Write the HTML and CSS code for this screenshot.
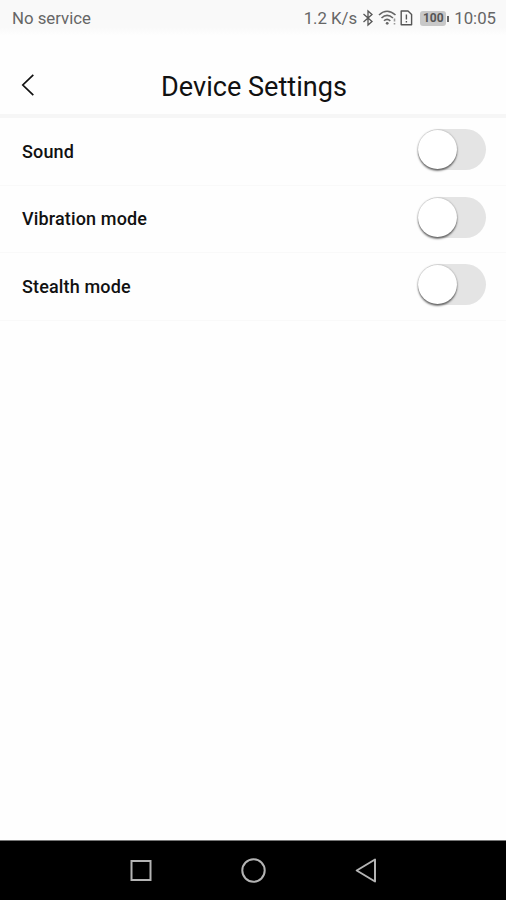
FILE: index.html
```html
<!DOCTYPE html>
<html lang="en">
<head>
    <meta charset="UTF-8">
    <meta name="viewport" content="width=device-width, initial-scale=1.0">
    <title>Device Settings</title>
    <link rel="stylesheet" href="styles.css">
</head>
<body>

    <div class="status-bar">
        <span class="carrier">No service</span>
        <div class="status-right">
            <span class="speed">1.2 K/s</span>
            <svg class="icon-bluetooth" width="12" height="18" viewBox="0 0 12 18" fill="none" stroke="#555" stroke-width="1.3">
                <path d="M1.5 5 L10 12.5 L6 16 V2 L10 5.5 L1.5 13"/>
            </svg>
            <svg class="icon-wifi" width="19" height="18" viewBox="0 0 19 18" fill="none" stroke="#666" stroke-width="1.6">
                <path d="M1 6 Q9 -1.5 17.5 6"/>
                <path d="M3.5 9 Q9 3.8 15 9"/>
                <path d="M6 11.8 Q9 8.8 12.3 11.8"/>
                <circle cx="9.2" cy="14.3" r="1.4" fill="#666" stroke="none"/>
                <path d="M16.5 9.5 V12.5 M16.5 14 V15.5" stroke="#999"/>
            </svg>
            <svg class="icon-sim" width="13" height="18" viewBox="0 0 13 18" fill="none" stroke="#555" stroke-width="1.4">
                <path d="M1.2 2 H8 L11.6 5.6 V15.8 H1.2 Z" stroke-linejoin="round"/>
                <path d="M6.4 5.5 V10.5 M6.4 12 V13.6"/>
            </svg>
            <div class="battery"><span>100</span></div>
            <span class="clock">10:05</span>
        </div>
    </div>

    <div class="header">
        <a href="#" class="back-button" aria-label="Back">
            <svg width="14" height="24" viewBox="0 0 14 24" fill="none" stroke="#111" stroke-width="1.7">
                <path d="M12.3 1.8 L1.8 12 L12.3 22.2"/>
            </svg>
        </a>
        <h1>Device Settings</h1>
    </div>

    <div class="settings">
        <label class="setting">
            <span>Sound</span>
            <input type="checkbox" class="switch">
        </label>
        <label class="setting">
            <span>Vibration mode</span>
            <input type="checkbox" class="switch">
        </label>
        <label class="setting">
            <span>Stealth mode</span>
            <input type="checkbox" class="switch">
        </label>
    </div>

    <div class="nav-bar">
        <svg width="24" height="26" viewBox="0 0 24 26" fill="none" stroke="#b4b4b4" stroke-width="2">
            <rect x="3.5" y="3" width="19" height="19"/>
        </svg>
        <svg width="26" height="26" viewBox="0 0 26 26" fill="none" stroke="#b4b4b4" stroke-width="2">
            <circle cx="13.5" cy="12.5" r="11.2"/>
        </svg>
        <svg width="24" height="26" viewBox="0 0 24 26" fill="none" stroke="#b4b4b4" stroke-width="2" stroke-linejoin="round">
            <path d="M21 1.5 V23.5 L2.7 12.5 Z"/>
        </svg>
    </div>

</body>
</html>
```
FILE: styles.css
```css
* {
    box-sizing: border-box;
}

body {
    font-family: Roboto, Arial, sans-serif;
    margin: 0;
    height: 900px;
    display: flex;
    flex-direction: column;
    background-color: #fefefe;
    color: #111;
}

.status-bar {
    display: flex;
    justify-content: space-between;
    align-items: center;
    height: 36px;
    padding: 0 10px 0 12px;
    background: linear-gradient(#f9f9f9 75%, #fefefe);
    color: #666;
    font-size: 16.8px;
}

.status-right {
    display: flex;
    align-items: center;
}

.icon-bluetooth {
    margin-left: 5px;
}

.icon-wifi {
    margin-left: 4px;
}

.icon-sim {
    margin-left: 3px;
}

.battery {
    display: flex;
    align-items: center;
    justify-content: center;
    position: relative;
    width: 26px;
    height: 15px;
    margin: 0 8px 0 7px;
    border-radius: 3px;
    background-color: #c8c8c8;
    color: #555;
    font-size: 12px;
    font-weight: bold;
}

.battery::after {
    content: "";
    position: absolute;
    right: -3px;
    top: 5px;
    width: 2px;
    height: 6px;
    background-color: #666;
}

.header {
    display: grid;
    grid-template-columns: 50px 1fr 48px;
    align-items: center;
    height: 82px;
    padding-top: 23px;
    border-bottom: 4px solid #f6f6f6;
}

.back-button {
    display: flex;
    padding: 0 0 4px 21px;
}

.header h1 {
    margin: 0;
    text-align: center;
    font-size: 27.1px;
    font-weight: normal;
}

.settings {
    flex: 1;
}

.setting {
    display: flex;
    justify-content: space-between;
    align-items: center;
    height: 67.5px;
    padding: 0 20px 0 22px;
    border-bottom: 1px solid #f9f9f9;
    font-size: 18px;
    font-weight: 500;
    letter-spacing: 0.15px;
}

.switch {
    appearance: none;
    width: 68px;
    height: 41px;
    margin: 0 0 3px;
    padding-top: 1px;
    border-radius: 21px;
    background-color: #e4e4e4;
}

.switch::before {
    content: "";
    display: block;
    width: 39px;
    height: 39px;
    border-radius: 50%;
    background-color: #fff;
    box-shadow: 0 2px 2px rgba(0, 0, 0, 0.5), 0 0 2px rgba(0, 0, 0, 0.3);
}

.switch:checked::before {
    margin-left: 29px;
}

.nav-bar {
    display: flex;
    justify-content: center;
    align-items: center;
    gap: 88px;
    height: 60px;
    border-top: 1px solid #777;
    background-color: #000;
}
```
